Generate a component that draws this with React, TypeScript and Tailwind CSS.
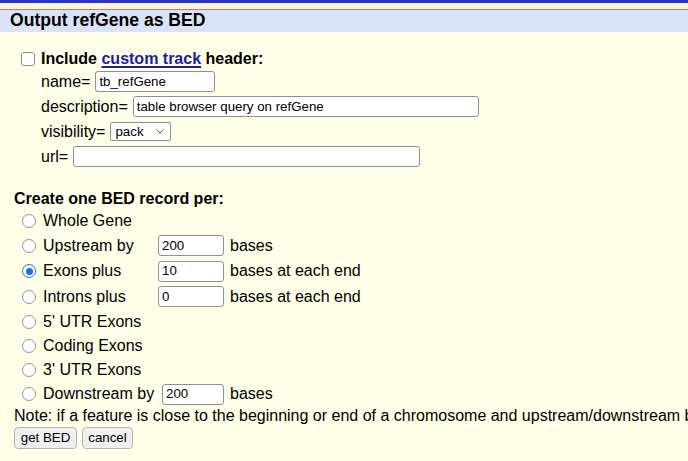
import React from "react";

function Radio({ checked = false }: { checked?: boolean }) {
  return checked ? (
    <span className="inline-flex h-[14px] w-[14px] shrink-0 items-center justify-center rounded-full border-[1.5px] border-[#1a6ef5] bg-white">
      <span className="h-[7px] w-[7px] rounded-full bg-[#1a6ef5]" />
    </span>
  ) : (
    <span className="inline-block h-[14px] w-[14px] shrink-0 rounded-full border border-[#939393] bg-white" />
  );
}

function TextBox({ value = "", w }: { value?: string; w: string }) {
  return (
    <div
      className={`${w} flex h-[21px] shrink-0 items-center rounded-[3px] border border-[#8f8f8f] bg-white pl-[3px] text-[13.3px] leading-none`}
    >
      {value}
    </div>
  );
}

type Row = { label: string; checked?: boolean; input?: string; suffix?: string; h: string; inline?: boolean };

const rows: Row[] = [
  { label: "Whole Gene", h: "h-[24px]" },
  { label: "Upstream by", input: "200", suffix: "bases", h: "h-[25px]" },
  { label: "Exons plus", checked: true, input: "10", suffix: "bases at each end", h: "h-[26px]" },
  { label: "Introns plus", input: "0", suffix: "bases at each end", h: "h-[25px]" },
  { label: "5' UTR Exons", h: "h-[25px]" },
  { label: "Coding Exons", h: "h-[24px]" },
  { label: "3' UTR Exons", h: "h-[24px]" },
  { label: "Downstream by", input: "200", suffix: "bases", h: "h-[24px]", inline: true },
];

export default function App() {
  return (
    <div
      className="h-[461px] w-[688px] overflow-hidden bg-[#fffee8] text-black"
      style={{ fontFamily: '"Liberation Sans", Arial, sans-serif' }}
    >
      <div className="h-[3px] bg-[#2b36c8]" />
      <div className="h-[6px] bg-[#fcf5d6]" />
      <div className="h-px bg-[#8c8c8c]" />
      <div className="flex h-[22px] items-center bg-[#dae3f5] pl-[10px] text-[17.6px] font-bold leading-none">
        Output refGene as BED
      </div>

      <div className="mt-[17px] flex h-[20px] items-center pl-[21px] text-[16px] font-bold">
        <span className="inline-block h-[14px] w-[14px] rounded-[3px] border border-[#8a8a8a] bg-white" />
        <span className="ml-[6px]">
          Include{" "}
          <span className="text-[#1d1da3] underline decoration-[1.5px] underline-offset-[2px]">custom track</span>{" "}
          header:
        </span>
      </div>

      <div className="pl-[41px] text-[16px]">
        <div className="flex h-[25px] items-center gap-[5px]">
          <span>name=</span>
          <TextBox value="tb_refGene" w="w-[120px]" />
        </div>
        <div className="flex h-[25px] items-center gap-[5px]">
          <span>description=</span>
          <TextBox value="table browser query on refGene" w="w-[346px]" />
        </div>
        <div className="flex h-[25px] items-center gap-[5px]">
          <span>visibility=</span>
          <div className="flex h-[19px] w-[61px] items-center justify-between rounded-[2px] border border-[#8f8f8f] bg-white pl-[4px] pr-[6px] text-[13.3px] leading-none">
            <span>pack</span>
            <svg width="8" height="5" viewBox="0 0 8 5" fill="none" stroke="#555" strokeWidth="1">
              <path d="M0.5 0.5 L4 4 L7.5 0.5" />
            </svg>
          </div>
        </div>
        <div className="flex h-[25px] items-center gap-[5px]">
          <span>url=</span>
          <TextBox w="w-[347px]" />
        </div>
      </div>

      <div className="mt-[20px] flex h-[20px] items-center pl-[14px] text-[16px] font-bold">
        Create one BED record per:
      </div>

      <div className="pl-[14px] text-[16px]">
        {rows.map((r) => (
          <div key={r.label} className={`${r.h} flex items-center`}>
            <div className={`flex ${r.inline ? "w-[148px]" : "w-[144px]"} shrink-0 items-center whitespace-nowrap pl-[8px]`}>
              <Radio checked={r.checked} />
              <span className="ml-[7px]">{r.label}</span>
            </div>
            {r.input !== undefined && (
              <>
                <TextBox value={r.input} w={r.inline ? "w-[62px]" : "w-[66px]"} />
                <span className="ml-[6px] whitespace-nowrap">{r.suffix}</span>
              </>
            )}
          </div>
        ))}
      </div>

      <div className="flex h-[20px] items-center overflow-hidden whitespace-nowrap pl-[14px] text-[16px]">
        Note: if a feature is close to the beginning or end of a chromosome and upstream/downstream bases are added, they may be truncated in order to avoid extending past the edge of the chromosome.
      </div>

      <div className="mt-[1px] flex gap-[5px] pl-[14px]">
        <div className="flex h-[22px] w-[63px] items-center justify-center rounded-[4px] border border-[#b3b3b3] bg-[#efefef] text-[13.3px]">
          get BED
        </div>
        <div className="flex h-[22px] w-[51px] items-center justify-center rounded-[4px] border border-[#b3b3b3] bg-[#efefef] text-[13.3px]">
          cancel
        </div>
      </div>
    </div>
  );
}
